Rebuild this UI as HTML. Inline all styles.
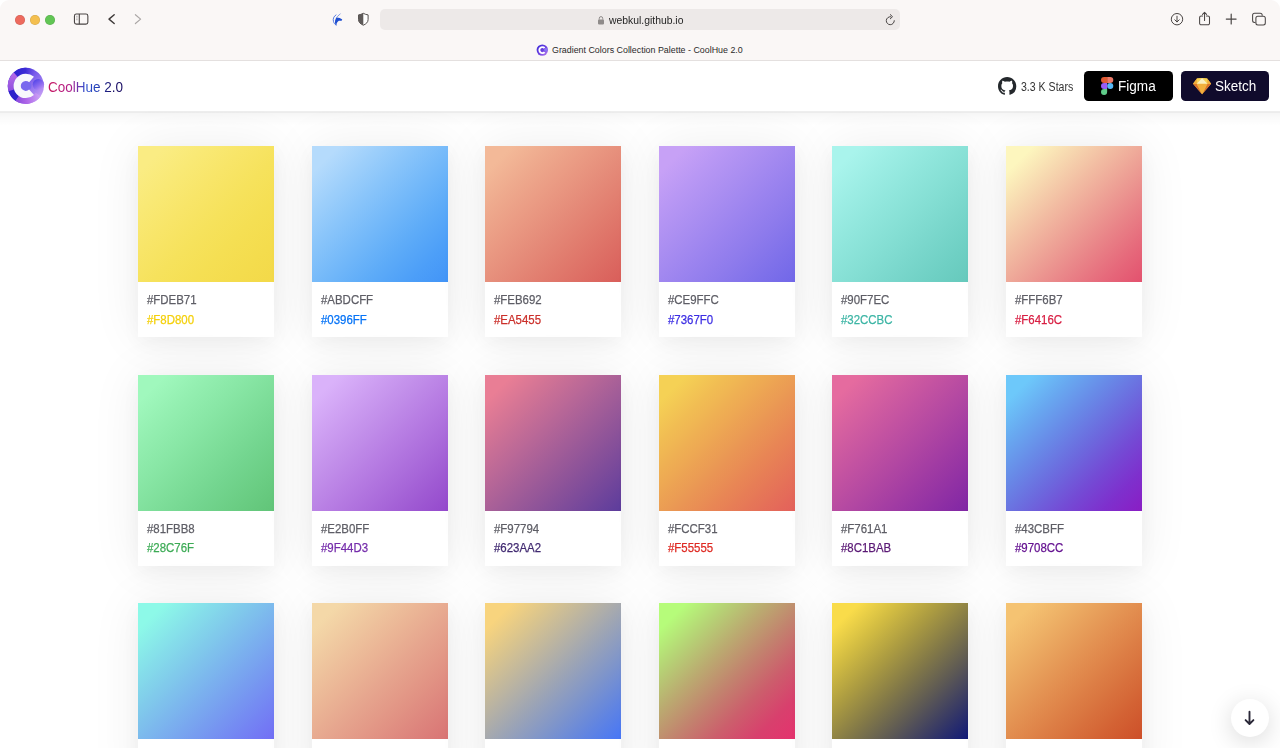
<!DOCTYPE html>
<html lang="en">
<head>
<meta charset="utf-8">
<title>Gradient Colors Collection Palette - CoolHue 2.0</title>
<style>
*{box-sizing:border-box;margin:0;padding:0}
html,body{width:1280px;height:748px;overflow:hidden;background:#fff}
body{font-family:"Liberation Sans",sans-serif;position:relative;-webkit-font-smoothing:antialiased}
#win{position:absolute;left:0;top:0;width:1280px;height:748px;border-radius:9px 9px 0 0;overflow:hidden;background:#fff}
#chrome{position:absolute;left:0;top:0;width:1280px;height:61px;background:#FAF7F6;border-bottom:1px solid #E4E0DF}
.tl{position:absolute;top:14.5px;width:10px;height:10px;border-radius:50%;box-shadow:inset 0 0 0 .5px rgba(0,0,0,.14)}
#url{position:absolute;left:380px;top:9px;width:520px;height:21px;border-radius:5px;background:#EDE9E8}
#urltxt{position:absolute;left:609px;top:14px;font-size:10.5px;line-height:13px;color:#242424;white-space:nowrap;transform:scaleX(.988);transform-origin:0 0}
#tabtitle{position:absolute;left:552.2px;top:44.3px;font-size:8.9px;line-height:11px;color:#2a2a2a;white-space:nowrap;transform:translateY(.6px) scaleX(.999);transform-origin:0 0}
.ic{position:absolute;overflow:visible}
#hdr{position:absolute;left:0;top:61px;width:1280px;height:50px;background:#fff}
#hsh{position:absolute;left:0;top:111px;width:1280px;height:16px;background:linear-gradient(to bottom,rgba(0,0,0,.03) 0,rgba(0,0,0,.075) .6px,rgba(0,0,0,.075) 1.6px,rgba(0,0,0,.035) 2.4px,rgba(0,0,0,.02) 7px,rgba(0,0,0,0) 15px)}
#brand{position:absolute;left:47.8px;top:17px;font-size:14px;line-height:18px;white-space:nowrap;transform:scaleX(.965);transform-origin:0 0;background:linear-gradient(90deg,#C8175F 0%,#B01C8A 30%,#2B4FD0 50%,#2440B8 65%,#1B0F66 85%);-webkit-background-clip:text;background-clip:text;color:transparent}
#stars{position:absolute;left:1021px;top:17px;font-size:12.5px;line-height:18px;color:#333;white-space:nowrap;transform:scaleX(.845);transform-origin:0 0}
.btn{position:absolute;top:10px;height:30px;border-radius:4.5px;color:#fff;font-size:14px;line-height:30px;white-space:nowrap}
.btn span{position:absolute;top:0}
.card{position:absolute;width:136px;height:190.8px;background:#fff;box-shadow:0 0 51px rgba(0,0,0,.07),0 6px 18px rgba(0,0,0,.04)}
.g{position:absolute;left:0;top:0;width:136px;height:135.8px}
.t1,.t2{position:absolute;left:9px;font-size:12.5px;line-height:16px;white-space:nowrap;transform:scaleX(.915);transform-origin:0 0;-webkit-text-stroke:.25px currentColor}
.t1{top:146.4px;color:#5E5E66}
.t2{top:165.7px}
#down{position:absolute;left:1231px;top:698.7px;width:38px;height:38px;border-radius:50%;background:#fff;box-shadow:0 5px 25px rgba(0,0,0,.15)}
</style>
</head>
<body>
<div id="win">
<div id="page">
<div class="card" style="left:138.05px;top:146px"><div class="g" style="background:linear-gradient(135deg,#FAEC83 10%,#F9E975 25%,#F8E568 40%,#F6E25C 55%,#F5DF53 70%,#F4DC4D 85%,#F3D949 100%)"></div><div class="t1">#FDEB71</div><div class="t2" style="color:#F4D00B">#F8D800</div></div>
<div class="card" style="left:311.62px;top:146px"><div class="g" style="background:linear-gradient(135deg,#B5DBFC 10%,#9DCFFB 25%,#86C3FA 40%,#71B7F9 55%,#5DABF8 70%,#4D9FF8 85%,#4294F7 100%)"></div><div class="t1">#ABDCFF</div><div class="t2" style="color:#0673F6">#0396FF</div></div>
<div class="card" style="left:485.19px;top:146px"><div class="g" style="background:linear-gradient(135deg,#F3B998 10%,#EEA98D 25%,#EA9A83 40%,#E58B79 55%,#E17C6E 70%,#DD6D64 85%,#D95E5A 100%)"></div><div class="t1">#FEB692</div><div class="t2" style="color:#CB302B">#EA5455</div></div>
<div class="card" style="left:658.76px;top:146px"><div class="g" style="background:linear-gradient(135deg,#C7A1F6 10%,#B897F4 25%,#AA8EF1 40%,#9C84EF 55%,#8E7BEC 70%,#7F71EA 85%,#7167E8 100%)"></div><div class="t1">#CE9FFC</div><div class="t2" style="color:#3C2EE3">#7367F0</div></div>
<div class="card" style="left:832.33px;top:146px"><div class="g" style="background:linear-gradient(135deg,#A9F4EC 10%,#9CEDE4 25%,#90E6DC 40%,#85DFD4 55%,#7AD7CC 70%,#6FD0C4 85%,#66C9BC 100%)"></div><div class="t1">#90F7EC</div><div class="t2" style="color:#3DB5A5">#32CCBC</div></div>
<div class="card" style="left:1005.9px;top:146px"><div class="g" style="background:linear-gradient(135deg,#FDF6BE 10%,#F7D9B0 25%,#F2BCA2 40%,#EDA095 55%,#E98488 70%,#E6697B 85%,#E3516E 100%)"></div><div class="t1">#FFF6B7</div><div class="t2" style="color:#D81F43">#F6416C</div></div>
<div class="card" style="left:138.05px;top:374.75px"><div class="g" style="background:linear-gradient(135deg,#A0F8BD 10%,#94EFB1 25%,#89E7A6 40%,#7EDE9A 55%,#73D58F 70%,#6ACD83 85%,#61C478 100%)"></div><div class="t1">#81FBB8</div><div class="t2" style="color:#3DAB56">#28C76F</div></div>
<div class="card" style="left:311.62px;top:374.75px"><div class="g" style="background:linear-gradient(135deg,#DAB2FA 10%,#CEA0F2 25%,#C28FEA 40%,#B77DE3 55%,#AB6CDB 70%,#9F5AD3 85%,#9449CC 100%)"></div><div class="t1">#E2B0FF</div><div class="t2" style="color:#752DAB">#9F44D3</div></div>
<div class="card" style="left:485.19px;top:374.75px"><div class="g" style="background:linear-gradient(135deg,#E97E95 10%,#D17395 25%,#BA6897 40%,#A25D98 55%,#8B5299 70%,#74479B 85%,#5C3C9C 100%)"></div><div class="t1">#F97794</div><div class="t2" style="color:#412A71">#623AA2</div></div>
<div class="card" style="left:658.76px;top:374.75px"><div class="g" style="background:linear-gradient(135deg,#F5D155 10%,#F1BD53 25%,#EEAA53 40%,#EA9754 55%,#E88455 70%,#E57258 85%,#E3605B 100%)"></div><div class="t1">#FCCF31</div><div class="t2" style="color:#DE2A23">#F55555</div></div>
<div class="card" style="left:832.33px;top:374.75px"><div class="g" style="background:linear-gradient(135deg,#E56B9F 10%,#D45FA0 25%,#C453A1 40%,#B348A2 55%,#A23CA3 70%,#9131A4 85%,#8026A5 100%)"></div><div class="t1">#F761A1</div><div class="t2" style="color:#5A1975">#8C1BAB</div></div>
<div class="card" style="left:1005.9px;top:374.75px"><div class="g" style="background:linear-gradient(135deg,#6DC8FA 10%,#68A8F0 25%,#6889E7 40%,#6C6ADE 55%,#744BD5 70%,#7E30CD 85%,#8A1DC4 100%)"></div><div class="t1">#43CBFF</div><div class="t2" style="color:#651391">#9708CC</div></div>
<div class="card" style="left:138.05px;top:603.15px"><div class="g" style="background:linear-gradient(135deg,#8DF9E8 10%,#86E1EA 25%,#80CAEB 40%,#7BB3EE 55%,#779CF0 70%,#7485F3 85%,#726EF5 100%)"></div><div class="t1">#5EFCE8</div><div class="t2" style="color:#3731F5">#736EFE</div></div>
<div class="card" style="left:311.62px;top:603.15px"><div class="g" style="background:linear-gradient(135deg,#F4D8A8 10%,#EFC79F 25%,#EBB696 40%,#E6A58E 55%,#E29585 70%,#DD847D 85%,#D97474 100%)"></div><div class="t1">#FAD7A1</div><div class="t2" style="color:#CF4141">#E96D71</div></div>
<div class="card" style="left:485.19px;top:603.15px"><div class="g" style="background:linear-gradient(135deg,#F8D47E 10%,#D9C48E 25%,#BBB4A1 40%,#9CA4B5 55%,#7F95CA 70%,#6285E0 85%,#4776F6 100%)"></div><div class="t1">#FFD26F</div><div class="t2" style="color:#0848F8">#3677FF</div></div>
<div class="card" style="left:658.76px;top:603.15px"><div class="g" style="background:linear-gradient(135deg,#B6FC7A 10%,#B6D375 25%,#BBAA70 40%,#C2836E 55%,#CC5E6C 70%,#D8406D 85%,#E5326E 100%)"></div><div class="t1">#A0FE65</div><div class="t2" style="color:#C51550">#FA016D</div></div>
<div class="card" style="left:832.33px;top:603.15px"><div class="g" style="background:linear-gradient(135deg,#F9DC4A 10%,#D2BC42 25%,#AB9B41 40%,#847A47 55%,#5E5A54 70%,#373965 85%,#101978 100%)"></div><div class="t1">#FFDB01</div><div class="t2" style="color:#080D43">#0E197D</div></div>
<div class="card" style="left:1005.9px;top:603.15px"><div class="g" style="background:linear-gradient(135deg,#F5C372 10%,#EDAF65 25%,#E69B58 40%,#E0874B 55%,#D9743F 70%,#D36133 85%,#CD4F29 100%)"></div><div class="t1">#FEC163</div><div class="t2" style="color:#9C3A1C">#DE4313</div></div>
</div>
<div id="hsh"></div>
<div id="hdr">
<svg class="ic" style="left:7.1px;top:5px" width="38" height="38" viewBox="0 0 38 38" fill="none">
<defs>
<linearGradient id="la" x1="6" y1="4" x2="33" y2="34" gradientUnits="userSpaceOnUse"><stop offset="0" stop-color="#3426D3"/><stop offset=".4" stop-color="#7658EA"/><stop offset=".7" stop-color="#9C7CF0"/><stop offset="1" stop-color="#CFA4F6"/></linearGradient>
<linearGradient id="lb" x1="4" y1="8" x2="4" y2="28" gradientUnits="userSpaceOnUse"><stop offset="0" stop-color="#B56AE8"/><stop offset="1" stop-color="#8748DC"/></linearGradient>
<linearGradient id="lc" x1="8" y1="32" x2="33" y2="30" gradientUnits="userSpaceOnUse"><stop offset="0" stop-color="#8546DC"/><stop offset=".45" stop-color="#AE66E8"/><stop offset="1" stop-color="#CBA2F6"/></linearGradient>
<linearGradient id="ld" x1="27" y1="13" x2="36" y2="26" gradientUnits="userSpaceOnUse"><stop offset="0" stop-color="#4A3FE6"/><stop offset=".5" stop-color="#8B6AF0"/><stop offset="1" stop-color="#D8A6F6"/></linearGradient>
<linearGradient id="le" x1="7" y1="6" x2="28" y2="6" gradientUnits="userSpaceOnUse"><stop offset="0" stop-color="#2F22CF"/><stop offset=".55" stop-color="#3B2BD6"/><stop offset="1" stop-color="#6B4EE6" stop-opacity="0"/></linearGradient>
</defs>
<circle cx="18.8" cy="19.9" r="18.1" fill="url(#la)"/>
<path d="M29.18 5.07A18.1 18.1 0 0 0 6.69 6.45L10.77 10.98A12.0 12.0 0 0 1 25.68 10.07Z" fill="url(#le)"/>
<path d="M6.69 6.45A18.1 18.1 0 0 0 1.49 25.19L7.32 23.41A12.0 12.0 0 0 1 10.77 10.98Z" fill="url(#lb)"/>
<path d="M1.49 25.19A18.1 18.1 0 0 0 8.68 34.91L12.09 29.85A12.0 12.0 0 0 1 7.32 23.41Z" fill="#2D21CB"/>
<path d="M8.68 34.91A18.1 18.1 0 0 0 33.63 30.28L28.63 26.78A12.0 12.0 0 0 1 12.09 29.85Z" fill="url(#lc)"/>
<circle cx="18.8" cy="19.9" r="5.6" fill="#7A68EE"/>
<path d="M24.55 13.51A8.6 8.6 0 1 0 24.55 26.29" stroke="#F8F7FC" stroke-width="7.2"/>
<circle cx="31.4" cy="18.6" r="5.7" fill="url(#ld)"/>
</svg>
<div id="brand">CoolHue 2.0</div>
<svg class="ic" style="left:997.7px;top:15.8px" width="18.3" height="18.3" viewBox="0 0 16 16"><path fill="#24282C" d="M8 0C3.58 0 0 3.58 0 8c0 3.54 2.29 6.53 5.47 7.59.4.07.55-.17.55-.38 0-.19-.01-.82-.01-1.49-2.01.37-2.53-.49-2.69-.94-.09-.23-.48-.94-.82-1.13-.28-.15-.68-.52-.01-.53.63-.01 1.08.58 1.23.82.72 1.21 1.87.87 2.33.66.07-.52.28-.87.51-1.07-1.78-.2-3.64-.89-3.64-3.95 0-.87.31-1.59.82-2.15-.08-.2-.36-1.02.08-2.12 0 0 .67-.21 2.2.82.64-.18 1.32-.27 2-.27.68 0 1.36.09 2 .27 1.53-1.04 2.2-.82 2.2-.82.44 1.1.16 1.92.08 2.12.51.56.82 1.27.82 2.15 0 3.07-1.87 3.75-3.65 3.95.29.25.54.73.54 1.48 0 1.07-.01 1.93-.01 2.2 0 .21.15.46.55.38A8.013 8.013 0 0016 8c0-4.42-3.58-8-8-8z"/></svg>
<div id="stars">3.3 K Stars</div>
<div class="btn" style="left:1084px;width:89px;background:#000"><svg class="ic" style="left:17px;top:6.1px" width="12.3" height="18" viewBox="0 0 38 57" preserveAspectRatio="none"><path d="M19 28.5a9.5 9.5 0 1 1 19 0 9.5 9.5 0 0 1-19 0z" fill="#58B9F8"/><path d="M0 47.5A9.5 9.5 0 0 1 9.5 38H19v9.5a9.5 9.5 0 1 1-19 0z" fill="#5FCC89"/><path d="M19 0v19h9.5a9.5 9.5 0 1 0 0-19H19z" fill="#EE7A69"/><path d="M0 9.5A9.5 9.5 0 0 0 9.5 19H19V0H9.5A9.5 9.5 0 0 0 0 9.5z" fill="#E05A33"/><path d="M0 28.5A9.5 9.5 0 0 0 9.5 38H19V19H9.5A9.5 9.5 0 0 0 0 28.5z" fill="#985DF6"/></svg><span style="left:33.7px;transform:scaleX(.97);transform-origin:0 0">Figma</span></div>
<div class="btn" style="left:1180.7px;width:88px;background:#100B2C"><svg class="ic" style="left:12.2px;top:7.2px" width="18.2" height="16.2" viewBox="0 0 394 356" preserveAspectRatio="none"><path d="M85.79 11.715L196.603 0l110.812 11.715 85.79 115.166L196.603 355.823 0 126.881z" fill="#F2B63F"/><path d="M79.634 126.881L196.603 355.823 0 126.881z" fill="#DA732C"/><path d="M313.571 126.881L196.603 355.823l196.602-228.942z" fill="#DA732C"/><path d="M79.634 126.881h233.937L196.603 355.823z" fill="#F1B03D"/><path d="M196.603 0L85.79 11.715 79.634 126.881z" fill="#F6D455"/><path d="M196.603 0l110.812 11.715 6.156 115.166z" fill="#F6D455"/><path d="M393.205 126.881L307.415 11.715l6.156 115.166z" fill="#F1B03D"/><path d="M0 126.881L85.79 11.715l-6.156 115.166z" fill="#F1B03D"/><path d="M196.603 0L79.634 126.881h233.937z" fill="#FBEFBD"/></svg><span style="left:34.4px;transform:scaleX(.965);transform-origin:0 0">Sketch</span></div>
</div>
<div id="chrome">
<div class="tl" style="left:14.5px;background:#ED6A5E"></div>
<div class="tl" style="left:29.7px;background:#F4BF4F"></div>
<div class="tl" style="left:44.8px;background:#61C554"></div>
<div id="url"></div>
<svg class="ic" style="left:0;top:0" width="1280" height="61" viewBox="0 0 1280 61" fill="none">
<!-- sidebar -->
<rect x="74.45" y="14.0" width="13.4" height="10.1" rx="1.9" stroke="#4A4645" stroke-width="1.1"/>
<path d="M79.3 13.9V24.2" stroke="#4A4645" stroke-width="1.1"/>
<path d="M76.3 16.3h1.2M76.3 18h1.2M76.3 19.7h1.2" stroke="#7d7978" stroke-width=".7"/>
<!-- back / fwd -->
<path d="M114.2 14.7L109 19.1L114.2 23.5" stroke="#3E3A39" stroke-width="1.4" stroke-linecap="round" stroke-linejoin="round"/>
<path d="M135.4 14.7L140.6 19.1L135.4 23.5" stroke="#ABA7A6" stroke-width="1.2" stroke-linecap="round" stroke-linejoin="round"/>
<!-- blue extension -->
<path d="M341.4 12.9C339.6 14.6 337.9 16.2 336.6 17.6C338.3 17.4 340.5 18.3 342.3 19.6L341.3 20.9C339.9 20.6 338.9 20.7 338.2 21.2C336.8 22.3 336.3 24 336.6 26C334.7 24.2 334.6 21.3 335.6 18.9C336.6 16.6 338.9 14.4 341.4 12.9Z" fill="#1F4FD0"/>
<path d="M336 14.9C333.6 16.4 332.7 19 333.5 21.6C333.9 22.9 334.6 24 335.6 24.8" stroke="#2B5BDA" stroke-width=".8" stroke-linecap="round"/>
<!-- shield -->
<path d="M363.3 13.3C361.7 14.2 360.2 14.7 358.5 14.9V19.6C358.5 22.1 360.4 24 363.3 25.2C366.2 24 368.1 22.1 368.1 19.6V14.9C366.4 14.7 364.9 14.2 363.3 13.3Z" fill="#fff" stroke="#55514F" stroke-width="1"/>
<path d="M363.3 13.3C361.7 14.2 360.2 14.7 358.5 14.9V19.6C358.5 22.1 360.4 24 363.3 25.2Z" fill="#5E5A59"/>
<!-- lock -->
<rect x="598" y="19.4" width="6" height="5" rx=".8" fill="#8F8B8A"/>
<path d="M599.3 19.6V18.3a1.7 1.7 0 0 1 3.4 0V19.6" stroke="#8F8B8A" stroke-width="1"/>
<!-- reload -->
<path d="M894.3 20.7A4 4 0 1 1 890.6 16.7" stroke="#4A4645" stroke-width="1" stroke-linecap="round"/>
<path d="M890.3 14.6L892.5 16.7L890.3 18.8" stroke="#4A4645" stroke-width="1" stroke-linecap="round" stroke-linejoin="round"/>
<!-- download -->
<circle cx="1177" cy="19.2" r="5.7" stroke="#4A4645" stroke-width="1"/>
<path d="M1177 16.2V21.8M1174.8 19.8L1177 22L1179.2 19.8" stroke="#4A4645" stroke-width="1" stroke-linecap="round" stroke-linejoin="round"/>
<!-- share -->
<path d="M1202.6 16H1201.2A1.6 1.6 0 0 0 1199.6 17.6V23.2A1.6 1.6 0 0 0 1201.2 24.8H1207.9A1.6 1.6 0 0 0 1209.5 23.2V17.6A1.6 1.6 0 0 0 1207.9 16H1206.5" stroke="#4A4645" stroke-width="1.05" stroke-linecap="round"/>
<path d="M1204.55 20.5V12.6M1202.5 14.4L1204.55 12.4L1206.6 14.4" stroke="#4A4645" stroke-width="1.05" stroke-linecap="round" stroke-linejoin="round"/>
<!-- plus -->
<path d="M1226.3 19.1H1236.1M1231.2 14.2V24" stroke="#4A4645" stroke-width="1.2" stroke-linecap="round"/>
<!-- tabs -->
<path d="M1255.4 22.4H1254.6A2 2 0 0 1 1252.6 20.4V15.2A2 2 0 0 1 1254.6 13.2H1260.2A2 2 0 0 1 1262.2 15.2V15.8" stroke="#4A4645" stroke-width="1.05"/>
<rect x="1255.9" y="16.3" width="9.4" height="8.7" rx="2" stroke="#4A4645" stroke-width="1.05"/>
<!-- favicon -->
<circle cx="542.3" cy="50.1" r="5.7" fill="url(#lg1)"/>
<path d="M544.6 48.1A3 3 0 1 0 544.6 52.1" stroke="#fff" stroke-width="1.9"/>
<circle cx="545.9" cy="49.7" r="1.8" fill="#8A74F2"/>
<defs><linearGradient id="lg1" x1="537" y1="45" x2="548" y2="56" gradientUnits="userSpaceOnUse"><stop offset="0" stop-color="#3B2AD8"/><stop offset=".5" stop-color="#6B3FE0"/><stop offset="1" stop-color="#C68BF0"/></linearGradient></defs>
</svg>
<div id="urltxt">webkul.github.io</div>
<div id="tabtitle">Gradient Colors Collection Palette - CoolHue 2.0</div>
</div>
<div id="down"><svg class="ic" style="left:0;top:0" width="38" height="38" viewBox="0 0 38 38" fill="none"><path d="M18.5 12.8V24.8M14.6 21.1L18.5 25L22.4 21.1" stroke="#2A2838" stroke-width="1.9" stroke-linecap="round" stroke-linejoin="round"/></svg></div>
</div>
</body>
</html>
